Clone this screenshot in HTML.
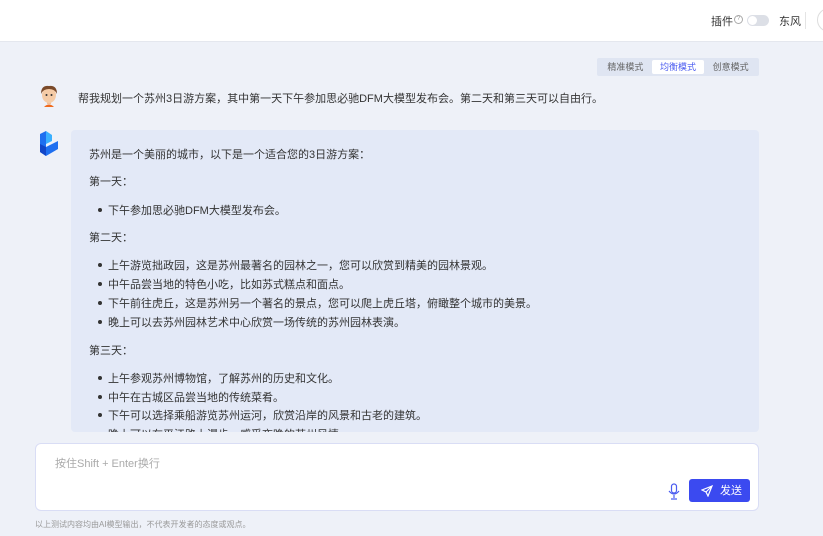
<!DOCTYPE html>
<html><head><meta charset="utf-8"><style>
*{margin:0;padding:0;box-sizing:border-box}
body{width:823px;height:536px;overflow:hidden;background:#eef1f8;font-family:"Liberation Sans","Noto Sans CJK SC",sans-serif;color:#333;position:relative}
.hdr{position:absolute;left:0;top:0;width:823px;height:42px;background:#fff;border-bottom:1px solid #e4e7ee}
.abs{position:absolute}
.tabs{left:597px;top:58px;width:162px;height:18px;background:#dfe5f2;border-radius:2px;font-size:9px;color:#666;display:flex;align-items:center;padding:0 2px}
.tabs span{flex:1;text-align:center;line-height:14px}
.tabs .on{background:#fff;color:#4b5cf0;border-radius:2px}
.resp{left:71px;top:130px;width:688px;height:302px;background:#e3e9f7;border-radius:4px;overflow:hidden;font-size:11px;color:#333}
.resp div,.resp li{position:absolute;white-space:nowrap}
.resp li{list-style:none;left:37px}
.resp li:before{content:"";position:absolute;left:-10px;top:6px;width:4px;height:4px;border-radius:50%;background:#333}
.inp{left:35px;top:443px;width:724px;height:68px;background:#fff;border:1px solid #d9ddf5;border-radius:6px}
</style></head><body>
<div class="hdr">
<div class="abs" style="left:711px;top:13px;font-size:11px;color:#333">插件</div>
<div class="abs" style="left:734px;top:15px;width:9px;height:9px;border:1px solid #aaa;border-radius:50%;font-size:6px;color:#999;text-align:center;line-height:7px">?</div>
<div class="abs" style="left:747px;top:15px;width:22px;height:11px;background:#dcdfe6;border-radius:6px"><div class="abs" style="left:1px;top:1px;width:9px;height:9px;background:#fff;border-radius:50%"></div></div>
<div class="abs" style="left:779px;top:13px;font-size:11px;color:#333">东风</div>
<div class="abs" style="left:805px;top:12px;width:1px;height:17px;background:#e4e4e4"></div>
<div class="abs" style="left:817px;top:8px;width:24px;height:24px;border:1px solid #ddd;border-radius:50%"></div>
</div>
<div class="abs tabs"><span>精准模式</span><span class="on">均衡模式</span><span>创意模式</span></div>
<svg class="abs" style="left:38px;top:83px" width="22" height="26" viewBox="0 0 22 26">
<path d="M6 24 Q11 19 16 24Z" fill="#f06a1c"/><rect x="9" y="18" width="4" height="3" fill="#f0c09a"/>
<ellipse cx="11" cy="12" rx="7" ry="8" fill="#f5cba6"/><path d="M3 11 Q3 2 11 3 Q19 2 19 11 Q17 6 11 6 Q5 6 3 11Z" fill="#7a4a2a"/>
<circle cx="8.5" cy="12" r="1" fill="#333"/><circle cx="13.5" cy="12" r="1" fill="#333"/></svg>
<div class="abs" style="left:78px;top:90px;font-size:11px;color:#333">帮我规划一个苏州3日游方案，其中第一天下午参加思必驰DFM大模型发布会。第二天和第三天可以自由行。</div>
<svg class="abs" style="left:38px;top:130px" width="22" height="28" viewBox="0 0 22 28">
<path d="M2 4 L8 1 L8 17 L20 11 L20 19 L8 26 L2 22Z" fill="#1e6ff0"/><path d="M8 1 L14 5 L14 11 L8 14Z" fill="#3ab0ff"/><path d="M2 22 L8 26 L8 17 L2 14Z" fill="#1246c8"/></svg>
<div class="abs resp">
<div style="left:18px;top:16px">苏州是一个美丽的城市，以下是一个适合您的3日游方案：</div>
<div style="left:18px;top:43px">第一天：</div>
<li style="top:72px">下午参加思必驰DFM大模型发布会。</li>
<div style="left:18px;top:99px">第二天：</div>
<li style="top:127px">上午游览拙政园，这是苏州最著名的园林之一，您可以欣赏到精美的园林景观。</li>
<li style="top:146px">中午品尝当地的特色小吃，比如苏式糕点和面点。</li>
<li style="top:165px">下午前往虎丘，这是苏州另一个著名的景点，您可以爬上虎丘塔，俯瞰整个城市的美景。</li>
<li style="top:184px">晚上可以去苏州园林艺术中心欣赏一场传统的苏州园林表演。</li>
<div style="left:18px;top:212px">第三天：</div>
<li style="top:240px">上午参观苏州博物馆，了解苏州的历史和文化。</li>
<li style="top:259px">中午在古城区品尝当地的传统菜肴。</li>
<li style="top:277px">下午可以选择乘船游览苏州运河，欣赏沿岸的风景和古老的建筑。</li>
<li style="top:296px">晚上可以在平江路上漫步，感受夜晚的苏州风情。</li>
</div>
<div class="abs inp">
<div class="abs" style="left:19px;top:11px;font-size:11px;color:#aaa">按住Shift + Enter换行</div>
<svg class="abs" style="left:632px;top:39px" width="12" height="17" viewBox="0 0 12 17" fill="none" stroke="#4b5cf0" stroke-width="1.2"><rect x="3.5" y="1" width="5" height="9" rx="2.5"/><path d="M1 8 Q6 14 11 8 M6 12 V15 M3 16 H9"/></svg>
<div class="abs" style="left:653px;top:35px;width:61px;height:23px;background:#3b4af0;border-radius:3px;color:#fff;font-size:11px;line-height:24px;padding-left:31px">发送
<svg class="abs" style="left:12px;top:6px" width="12" height="12" viewBox="0 0 12 12" fill="none" stroke="#fff" stroke-width="1.2"><path d="M11 1 L1 5 L5 7 L7 11Z M11 1 L5 7"/></svg></div>
</div>
<div class="abs" style="left:35px;top:519px;font-size:8px;color:#999">以上测试内容均由AI模型输出，不代表开发者的态度或观点。</div>
</body></html>
